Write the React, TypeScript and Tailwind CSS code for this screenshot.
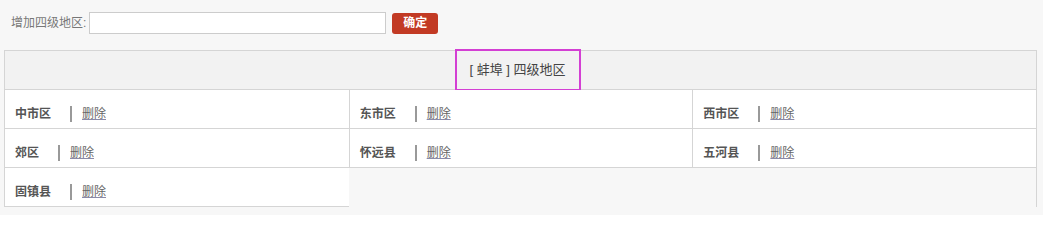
import React, { useState } from 'react';

const districts = ['中市区', '东市区', '西市区', '郊区', '怀远县', '五河县', '固镇县'];

const App: React.FC = () => {
    const [name, setName] = useState('');

    return (
        <div
            className="h-[215px] w-full overflow-hidden bg-[#f7f7f7] pt-[12px] text-[12px] text-[#666]"
            style={{ fontFamily: '"Liberation Sans", "Noto Sans CJK SC", sans-serif' }}
        >
            {/* add form */}
            <div className="flex h-[22px] items-center pl-[11px]">
                <label className="mr-[3px] leading-[22px] text-[#777]">增加四级地区:</label>
                <input
                    type="text"
                    className="h-[22px] w-[297px] border border-[#ccc] bg-white px-1 text-[12px] outline-none"
                    value={name}
                    onChange={(e) => setName(e.target.value)}
                />
                <button className="ml-[6px] h-[21px] w-[46px] rounded-[3px] bg-[#c23a24] text-[12px] font-bold leading-[21px] text-white">
                    确定
                </button>
            </div>

            {/* list */}
            <div className="ml-[4px] mt-[16px] w-[1033px] border-x border-t border-[#d5d5d5]">
                <div className="flex h-[39px] items-center justify-center border-b border-[#d5d5d5] bg-[#f2f2f2]">
                    <div className="-ml-[6px] flex h-[42px] w-[126px] items-center justify-center border-2 border-[#d33fd3] text-[13px] text-[#444]">
                        [ 蚌埠 ] 四级地区
                    </div>
                </div>
                <div className="grid grid-cols-3">
                    {districts.map((d, i) => (
                        <div
                            key={d}
                            className={`flex h-[39px] items-center border-b border-[#d5d5d5] bg-white pl-[10px] pt-[9px] ${i % 3 !== 0 ? 'border-l' : ''}`}
                        >
                            <span className="font-bold text-[#555]">{d}</span>
                            <span className="ml-[19px] h-[16px] w-[2px] bg-[#999]"></span>
                            <a href="#" className="ml-[10px] text-[#666] underline decoration-[#8a8aa8]">
                                删除
                            </a>
                        </div>
                    ))}
                </div>
            </div>
        </div>
    );
};

export default App;
